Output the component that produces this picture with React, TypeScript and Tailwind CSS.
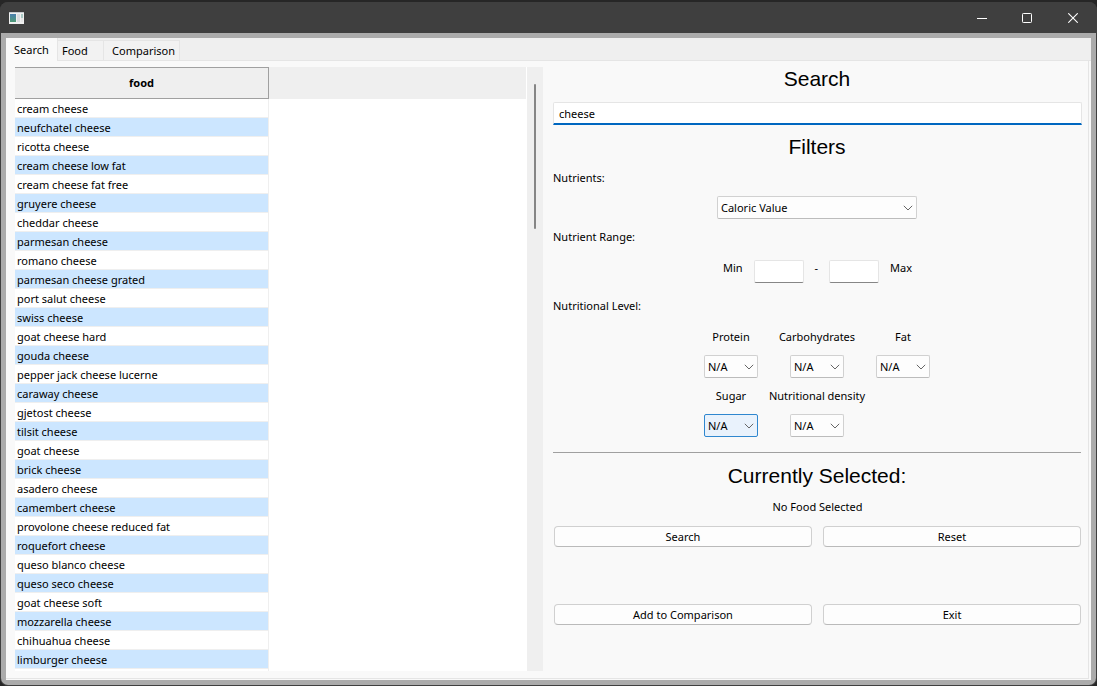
import { useState } from 'react';
import type { ReactNode } from 'react';

const foods = [
  'cream cheese',
  'neufchatel cheese',
  'ricotta cheese',
  'cream cheese low fat',
  'cream cheese fat free',
  'gruyere cheese',
  'cheddar cheese',
  'parmesan cheese',
  'romano cheese',
  'parmesan cheese grated',
  'port salut cheese',
  'swiss cheese',
  'goat cheese hard',
  'gouda cheese',
  'pepper jack cheese lucerne',
  'caraway cheese',
  'gjetost cheese',
  'tilsit cheese',
  'goat cheese',
  'brick cheese',
  'asadero cheese',
  'camembert cheese',
  'provolone cheese reduced fat',
  'roquefort cheese',
  'queso blanco cheese',
  'queso seco cheese',
  'goat cheese soft',
  'mozzarella cheese',
  'chihuahua cheese',
  'limburger cheese',
];

function TitleBar() {
  return (
    <header className="flex h-[31px] items-center justify-between bg-[#3f3f3f] pr-px pl-2">
      <svg width="16" height="14" viewBox="0 0 16 14" aria-hidden="true">
        <defs>
          <linearGradient id="appIcon" x1="0" y1="0" x2="0" y2="1">
            <stop offset="0" stopColor="#4a7fae" />
            <stop offset="1" stopColor="#4f9a76" />
          </linearGradient>
        </defs>
        <rect x="1" y="1" width="15" height="12" fill="#f0f0f0" />
        <rect x="1" y="1" width="15" height="1" fill="#c4c8cc" />
        <rect x="2" y="3" width="6" height="8" fill="url(#appIcon)" />
        <rect x="9" y="3" width="3" height="8" fill="#d9dcdf" />
        <rect x="13" y="3" width="2" height="4" fill="#a9c9c4" />
        <rect x="13" y="7" width="2" height="4" fill="#e6e6e6" />
      </svg>
      <div className="flex h-full">
        <button aria-label="Minimize" className="flex w-11 items-center justify-center">
          <svg width="10" height="10" viewBox="0 0 10 10">
            <path d="M0 5.5h10" stroke="#fff" />
          </svg>
        </button>
        <button aria-label="Maximize" className="flex w-[46px] items-center justify-center">
          <svg width="10" height="10" viewBox="0 0 10 10">
            <rect x="0.5" y="0.5" width="9" height="9" rx="0.8" fill="none" stroke="#fff" />
          </svg>
        </button>
        <button aria-label="Close" className="flex w-[46px] items-center justify-center">
          <svg width="10" height="10" viewBox="0 0 10 10">
            <path d="M0.3 0.3l9.4 9.4M9.7 0.3L0.3 9.7" stroke="#fff" strokeWidth="1.1" />
          </svg>
        </button>
      </div>
    </header>
  );
}

function Tabs() {
  return (
    <div role="tablist" className="flex items-end border-b border-[#e5e5e5] bg-[#efefef]">
      <button
        role="tab"
        aria-selected="true"
        className="-mb-px h-[23px] w-[52px] border-r border-[#e5e5e5] bg-[#f9f9f9] text-center"
      >
        Search
      </button>
      <button
        role="tab"
        aria-selected="false"
        className="h-5 w-[46px] border-t border-r border-[#e5e5e5] bg-[#f2f2f2] pl-1 text-left"
      >
        Food
      </button>
      <button
        role="tab"
        aria-selected="false"
        className="h-5 w-[76px] border-t border-r border-[#e5e5e5] bg-[#f2f2f2] pr-1 text-right"
      >
        Comparison
      </button>
    </div>
  );
}

function FoodTable() {
  return (
    <div className="flex pr-px">
      <div className="flex flex-1 flex-col bg-white">
        <div className="mr-px bg-[#efefef]">
          <table className="w-full border-separate border-spacing-0 text-left">
            <thead>
              <tr>
                <th
                  scope="col"
                  className="h-8 w-[254px] border-t border-r border-b border-[#a0a0a0] p-0 text-center font-bold"
                >
                  food
                </th>
                <td className="p-0" />
              </tr>
            </thead>
            <tbody>
              {foods.map((food) => (
                <tr key={food} className="group">
                  <td className="h-[19px] border-r border-b border-[#efefef] bg-white p-0 pt-[2px] pl-[2px] leading-4 group-even:bg-[#cce6ff]">
                    {food}
                  </td>
                  <td className="bg-white p-0" />
                </tr>
              ))}
            </tbody>
          </table>
        </div>
        <div className="w-[254px] flex-1 border-r border-[#efefef]" />
      </div>
      <div className="flex w-4 justify-center bg-[#efefef] pt-[17px]">
        <div className="h-[145px] w-[2px] rounded-full bg-[#858585]" />
      </div>
    </div>
  );
}

function Heading({ children }: { children: ReactNode }) {
  return (
    <h2 className="pr-px text-center font-['Liberation_Sans',Arial,sans-serif] text-[21px] leading-6">
      {children}
    </h2>
  );
}

function Select({
  id,
  options,
  wide,
  active,
}: {
  id: string;
  options: string[];
  wide?: boolean;
  active?: boolean;
}) {
  return (
    <div className={wide ? 'grid w-[200px]' : 'grid w-[54px]'}>
      <select
        id={id}
        className={
          'col-start-1 row-start-1 h-[23px] w-full appearance-none rounded-[2px] border pl-[3px] outline-none ' +
          (active
            ? 'border-[#2f87cf] bg-[#e9f2fc]'
            : 'border-[#d1d1d1] border-b-[#bcbcbc] bg-[#fdfdfd]')
        }
      >
        {options.map((o) => (
          <option key={o}>{o}</option>
        ))}
      </select>
      <svg
        className="pointer-events-none col-start-1 row-start-1 mr-1 self-center justify-self-end"
        width="10"
        height="6"
        viewBox="0 0 10 6"
        aria-hidden="true"
      >
        <path d="M0.8 0.8L5 5l4.2-4.2" fill="none" stroke="#666" />
      </svg>
    </div>
  );
}

function Level({ id, label, active }: { id: string; label: string; active?: boolean }) {
  return (
    <div className="flex w-[86px] flex-col items-center gap-2">
      <label htmlFor={id} className="leading-5 whitespace-nowrap">
        {label}
      </label>
      <Select id={id} options={['N/A', 'Low', 'Medium', 'High']} active={active} />
    </div>
  );
}

function PushButton({ children }: { children: ReactNode }) {
  return (
    <button className="h-[21px] rounded-[4px] border border-[#d0d0d0] border-b-[#bababa] bg-[#fdfdfd] leading-[18px]">
      {children}
    </button>
  );
}

function SearchPanel() {
  const [query, setQuery] = useState('cheese');
  const box =
    'h-[23px] w-[50px] rounded-[2px] border border-[#e5e5e5] border-b-[#868686] bg-white px-1 outline-none';
  return (
    <form className="flex flex-col" onSubmit={(e) => e.preventDefault()}>
      <Heading>Search</Heading>
      <input
        aria-label="Search"
        value={query}
        onChange={(e) => setQuery(e.target.value)}
        className="mt-[11px] mb-[10px] h-[23px] w-full rounded-t-[2px] border border-b-2 border-[#e5e5e5] border-b-[#0067c0] bg-white px-[5px] outline-none"
      />
      <Heading>Filters</Heading>
      <label htmlFor="nutrient" className="mt-[9px] leading-5">
        Nutrients:
      </label>
      <div className="mt-2 flex justify-center pr-px">
        <Select id="nutrient" options={['Caloric Value', 'Protein', 'Fat']} wide />
      </div>
      <p className="mt-2 leading-5">Nutrient Range:</p>
      <div className="mt-[13px] flex items-start justify-center gap-[11px] leading-4">
        <label htmlFor="min">Min</label>
        <input id="min" className={box} />
        <span>-</span>
        <input id="max" className={box} />
        <label htmlFor="max">Max</label>
      </div>
      <p className="mt-[13px] leading-5">Nutritional Level:</p>
      <div className="mt-[11px] grid grid-cols-[repeat(3,86px)] justify-center gap-y-2 pr-px">
        <Level id="protein" label="Protein" />
        <Level id="carbs" label="Carbohydrates" />
        <Level id="fat" label="Fat" />
        <Level id="sugar" label="Sugar" active />
        <Level id="density" label="Nutritional density" />
      </div>
      <hr className="mt-[15px] mr-px mb-[11px] border-[#a0a0a0]" />
      <Heading>Currently Selected:</Heading>
      <p className="mt-[9px] text-center leading-5">No Food Selected</p>
      <div className="mt-[9px] grid grid-cols-2 gap-x-[11px] gap-y-[57px] px-px">
        <PushButton>Search</PushButton>
        <PushButton>Reset</PushButton>
        <PushButton>Add to Comparison</PushButton>
        <PushButton>Exit</PushButton>
      </div>
    </form>
  );
}

export default function App() {
  return (
    <div className="flex min-h-screen flex-col bg-[#262626] pt-[2px] font-['Noto_Sans','Open_Sans',sans-serif] text-[11px] leading-[18px] text-black">
      <div className="flex flex-1 flex-col overflow-hidden rounded-lg bg-[#3f3f3f]">
        <TitleBar />
        <div className="mx-px mb-px flex flex-1 flex-col rounded-b-[7px] bg-[#ababab] p-[5px]">
          <main className="flex flex-1 flex-col bg-[#f9f9f9]">
            <Tabs />
            <div className="mr-[2px] mb-px grid flex-1 grid-cols-2 gap-[9px] border-r border-b border-[#e5e5e5] pt-[6px] pr-[6px] pb-[7px] pl-[9px]">
              <FoodTable />
              <SearchPanel />
            </div>
          </main>
        </div>
      </div>
    </div>
  );
}
